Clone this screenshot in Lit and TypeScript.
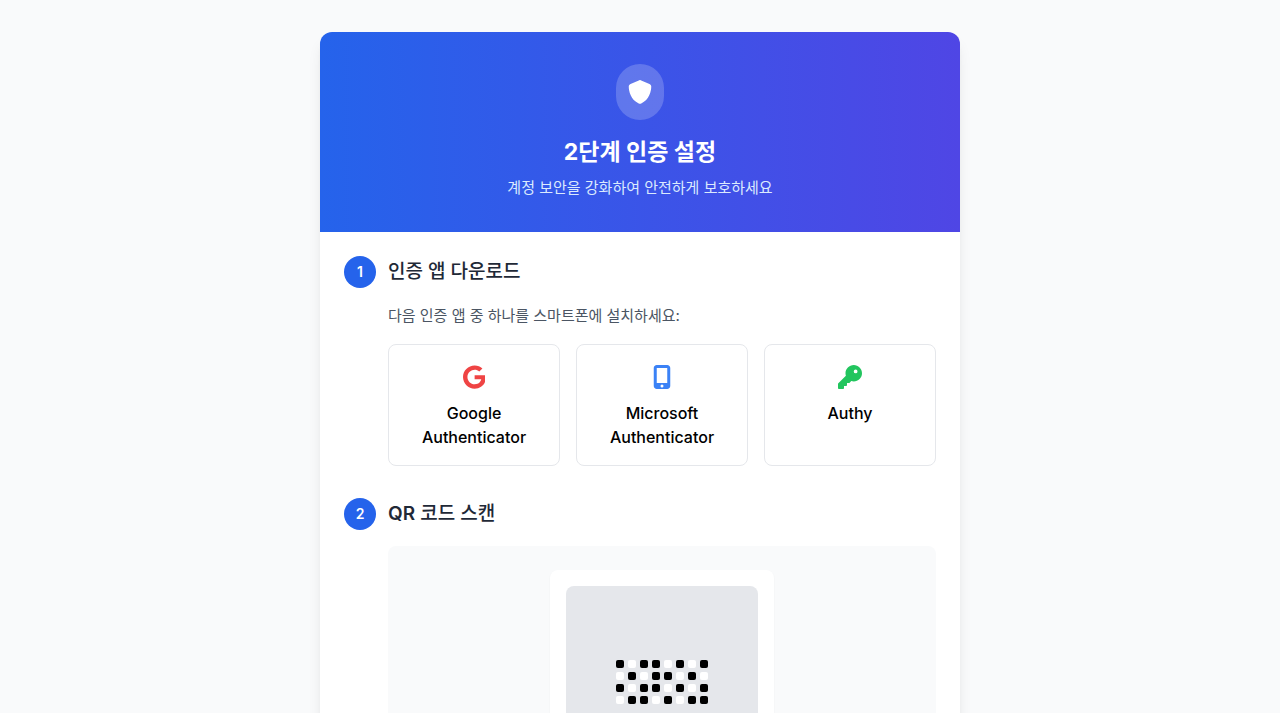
import { LitElement, html, css, svg } from "lit";
import { customElement } from "lit/decorators.js";
import { classMap } from "lit/directives/class-map.js";

const icons = {
  shield: {
    box: "0 0 512 512",
    path: "M256 0c4.600 0 9.200 1 13.400 2.900L457.700 82.800c22 9.300 38.400 31 38.300 57.200c-.5 99.200-41.300 280.700-213.600 363.200c-16.700 8-36.100 8-52.800 0C57.300 420.700 16.500 239.200 16 140c-.1-26.200 16.300-47.900 38.300-57.200L242.700 2.900C246.800 1 251.400 0 256 0z",
  },
  google: {
    box: "0 0 488 512",
    path: "M488 261.800C488 403.300 391.100 504 248 504 110.800 504 0 393.200 0 256S110.800 8 248 8c66.800 0 123 24.500 166.300 64.900l-67.500 64.900C258.500 52.600 94.300 116.600 94.300 256c0 86.500 69.100 156.600 153.700 156.600 98.200 0 135-70.400 140.800-106.900H248v-85.300h236.100c2.300 12.700 3.900 24.900 3.900 41.400z",
  },
  mobile: {
    box: "0 0 384 512",
    path: "M16 64C16 28.700 44.700 0 80 0H304c35.300 0 64 28.700 64 64V448c0 35.300-28.700 64-64 64H80c-35.300 0-64-28.700-64-64V64zM224 448a32 32 0 1 0-64 0 32 32 0 1 0 64 0zM304 64H80V384H304V64z",
  },
  key: {
    box: "0 0 512 512",
    path: "M336 352c97.200 0 176-78.800 176-176S433.200 0 336 0S160 78.800 160 176c0 18.700 2.900 36.800 8.300 53.700L7 391c-4.500 4.500-7 10.600-7 17v80c0 13.300 10.700 24 24 24h80c13.300 0 24-10.700 24-24V448h40c13.300 0 24-10.700 24-24V384h40c6.400 0 12.500-2.500 17-7l33.300-33.300c16.900 5.400 35 8.300 53.700 8.300zM376 96a40 40 0 1 1 0 80 40 40 0 1 1 0-80z",
  },
};

type IconName = keyof typeof icons;

const icon = (name: IconName, tone: string) => html`
  <svg class="icon ${tone}" viewBox=${icons[name].box} aria-hidden="true">
    ${svg`<path fill-rule="evenodd" d=${icons[name].path}></path>`}
  </svg>
`;

const apps: { name: string; icon: IconName; tone: string }[] = [
  { name: "Google Authenticator", icon: "google", tone: "red" },
  { name: "Microsoft Authenticator", icon: "mobile", tone: "blue" },
  { name: "Authy", icon: "key", tone: "green" },
];

const qrRows = ["10110101", "01011010", "10110101", "01101011"];

@customElement("app-root")
export class AppRoot extends LitElement {
  static styles = css`
    :host {
      display: block;
      min-height: 100vh;
      box-sizing: border-box;
      padding: 32px 16px;
      background: #f9fafb;
      color: #000;
      font-family: Inter, "Noto Sans CJK KR", sans-serif;
      font-size: 15px;
      line-height: 24px;
    }
    h1, h2, p {
      margin: 0;
    }
    .card {
      max-width: 640px;
      margin: 0 auto;
      border-radius: 12px;
      background: #fff;
      overflow: hidden;
      box-shadow: 0 10px 15px -3px rgb(0 0 0 / 0.1), 0 4px 6px -4px rgb(0 0 0 / 0.1);
    }
    .hero {
      display: flex;
      flex-direction: column;
      align-items: center;
      padding: 32px;
      background: linear-gradient(to right, #2563eb, #4f46e5);
      color: #fff;
      text-align: center;
    }
    .badge {
      display: flex;
      align-items: center;
      padding: 16px 12px;
      margin-bottom: 16px;
      border-radius: 28px;
      background: rgb(255 255 255 / 0.2);
    }
    .icon {
      display: block;
      height: 24px;
      fill: currentColor;
    }
    .red { color: #ef4444; }
    .blue { color: #3b82f6; }
    .green { color: #22c55e; }
    h1 {
      font-size: 23px;
      line-height: 32px;
      font-weight: 700;
    }
    .lead {
      margin-top: 8px;
      color: #dbeafe;
    }
    .steps {
      display: flex;
      flex-direction: column;
      gap: 32px;
      padding: 24px;
    }
    .step {
      display: grid;
      grid-template-columns: 32px 1fr;
      gap: 16px 12px;
      align-items: center;
    }
    .step > :nth-child(n + 3) {
      grid-column: 2;
    }
    .number {
      display: flex;
      align-items: center;
      justify-content: center;
      height: 32px;
      border-radius: 50%;
      background: #2563eb;
      color: #fff;
      font-size: 14px;
      font-weight: 600;
    }
    h2 {
      color: #1f2937;
      font-size: 19px;
      line-height: 32px;
      font-weight: 500;
    }
    .strong {
      font-weight: 600;
    }
    .hint {
      color: #4b5563;
    }
    .apps {
      display: grid;
      grid-template-columns: repeat(3, 1fr);
      gap: 16px;
    }
    .app {
      display: flex;
      flex-direction: column;
      align-items: center;
      gap: 12px;
      padding: 20px 16px 16px;
      border: 1px solid #e5e7eb;
      border-radius: 8px;
      text-align: center;
      font-size: 16px;
      font-weight: 450;
    }
    .panel {
      display: flex;
      justify-content: center;
      padding: 24px;
      border-radius: 8px;
      background: #f9fafb;
    }
    .frame {
      padding: 16px;
      border-radius: 8px;
      background: #fff;
      box-shadow: 0 1px 2px rgb(0 0 0 / 0.05);
    }
    .qr {
      display: grid;
      grid-template-columns: repeat(8, 8px);
      grid-auto-rows: 8px;
      place-content: center;
      gap: 4px;
      width: 192px;
      aspect-ratio: 1;
      border-radius: 8px;
      background: #e5e7eb;
    }
    .dot {
      border-radius: 2px;
      background: #fff;
    }
    .dot.on {
      background: #000;
    }
  `;

  render() {
    return html`
      <main class="card">
        <header class="hero">
          <div class="badge">${icon("shield", "white")}</div>
          <h1>2단계 인증 설정</h1>
          <p class="lead">계정 보안을 강화하여 안전하게 보호하세요</p>
        </header>
        <div class="steps">
          <section class="step">
            <span class="number">1</span>
            <h2>인증 앱 다운로드</h2>
            <p class="hint">다음 인증 앱 중 하나를 스마트폰에 설치하세요:</p>
            <div class="apps">
              ${apps.map(
                (app) => html`
                  <div class="app">
                    ${icon(app.icon, app.tone)}
                    <p>${app.name}</p>
                  </div>
                `,
              )}
            </div>
          </section>
          <section class="step">
            <span class="number">2</span>
            <h2><span class="strong">QR</span> 코드 스캔</h2>
            <div class="panel">
              <div class="frame">
                <div class="qr">
                  ${[...qrRows.join("")].map(
                    (cell) => html`<span class=${classMap({ dot: true, on: cell === "1" })}></span>`,
                  )}
                </div>
              </div>
            </div>
          </section>
        </div>
      </main>
    `;
  }
}
